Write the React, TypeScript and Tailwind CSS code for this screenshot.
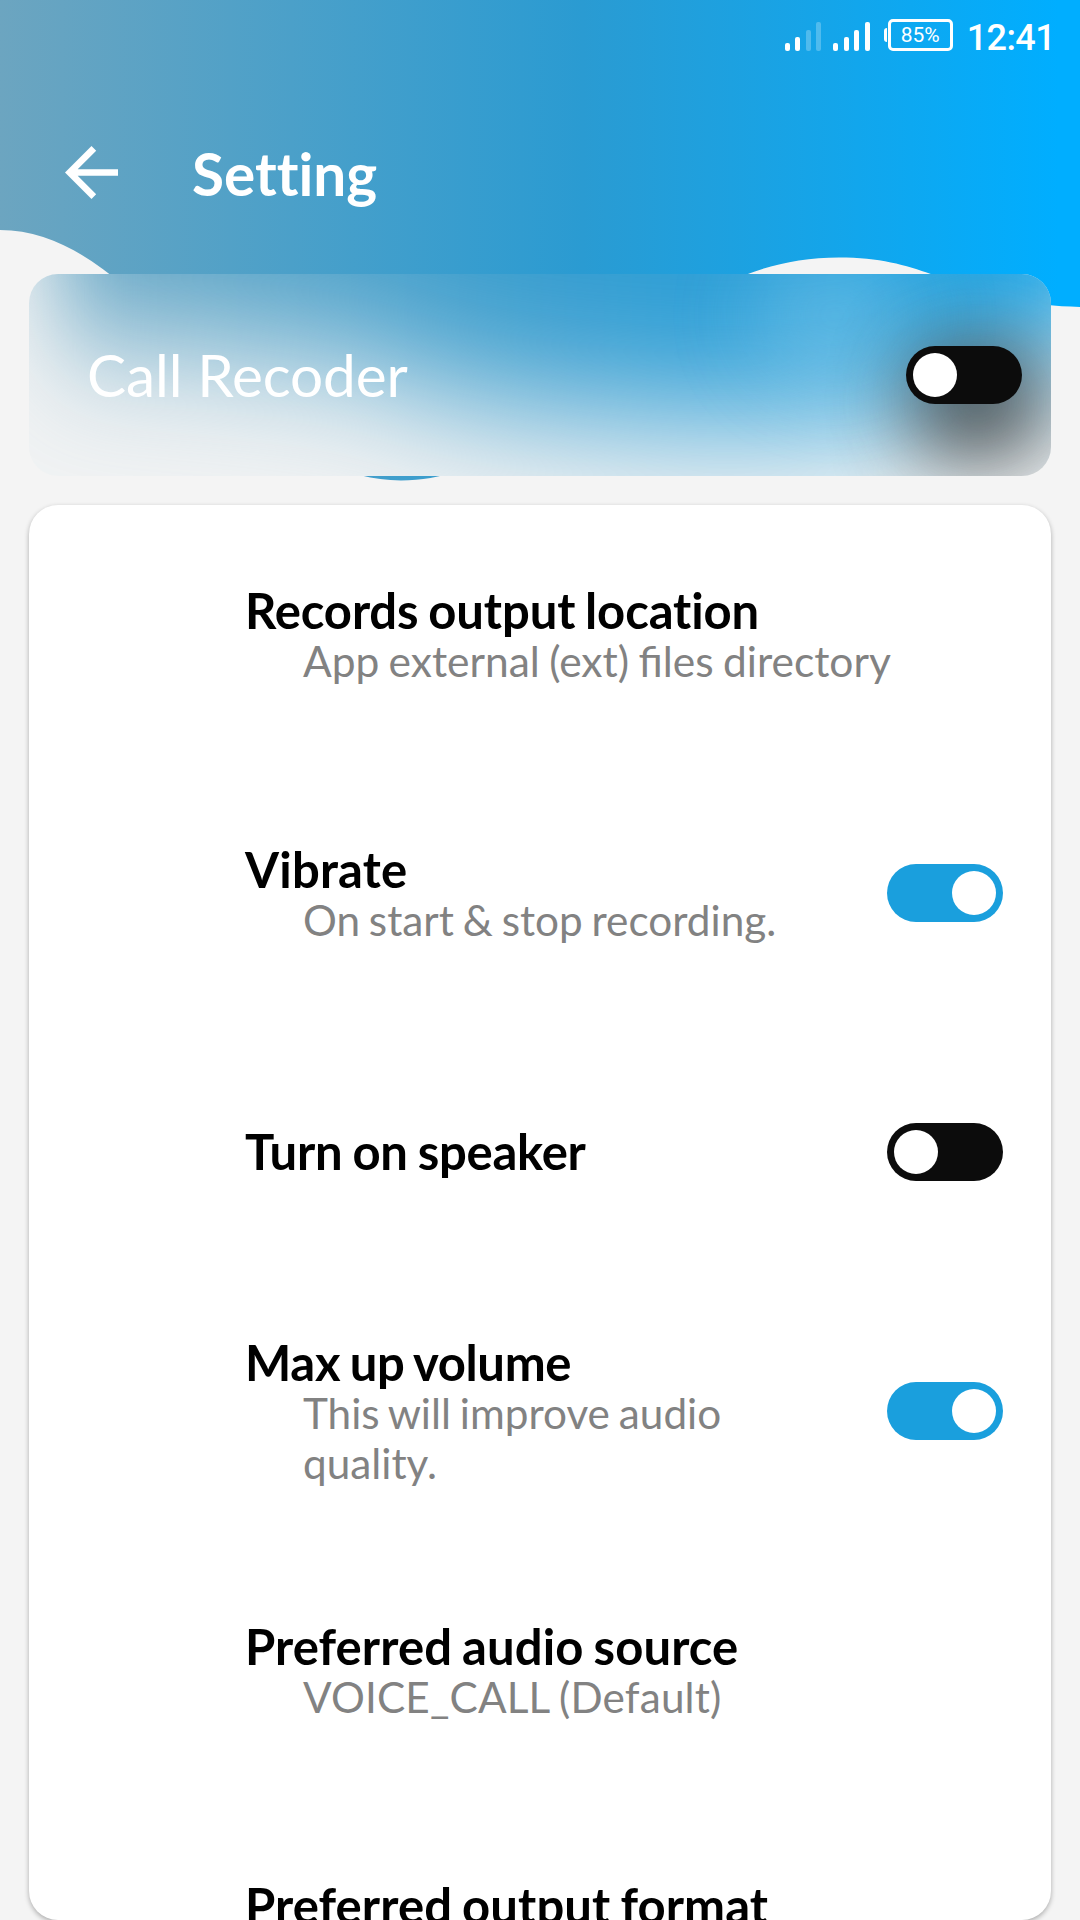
import React from "react";

function Toggle({ on }: { on: boolean }) {
  return (
    <div
      className={
        "flex h-[58px] w-[116px] shrink-0 items-center rounded-full px-[7px] " +
        (on ? "justify-end bg-[#1a9fdd]" : "justify-start bg-[#0c0c0c]")
      }
    >
      <div className="size-[44px] rounded-full bg-white" />
    </div>
  );
}

function Signal({ active }: { active: number }) {
  const heights = ["h-[8px]", "h-[14px]", "h-[21px]", "h-[29px]"];
  return (
    <div className="flex items-end gap-[5.5px]">
      {heights.map((h, i) => (
        <div key={h} className={h + " w-[5px] rounded-[2px] bg-white " + (i < active ? "" : "opacity-25")} />
      ))}
    </div>
  );
}

function Wave() {
  return (
    <svg className="absolute left-0 top-0" width="1080" height="490" viewBox="0 0 1080 490">
      <defs>
        <linearGradient id="sky" x1="0" x2="1" y1="0" y2="0">
          <stop offset="0" stopColor="#6ca5c0" />
          <stop offset="0.54" stopColor="#2a9bd2" />
          <stop offset="0.98" stopColor="#00aeff" />
        </linearGradient>
      </defs>
      <path
        fill="url(#sky)"
        d="M0 0H1080V307C955 304 939 257.500 839 257.500C637 257.500 564 480.500 401 480.500C238 480.500 150 230 0 230Z"
      />
    </svg>
  );
}

function FrostedGlass() {
  return (
    <svg className="absolute inset-0" width="1022" height="202" viewBox="29 274 1022 202">
      <defs>
        <linearGradient id="frost" gradientUnits="userSpaceOnUse" x1="0" x2="1080" y1="0" y2="0">
          <stop offset="0" stopColor="#6aa5c2" />
          <stop offset="0.2" stopColor="#5ba4c7" />
          <stop offset="0.5" stopColor="#3a9ecf" />
          <stop offset="0.63" stopColor="#309fd6" />
          <stop offset="0.9" stopColor="#20a4e2" />
          <stop offset="1" stopColor="#1ca9ec" />
        </linearGradient>
        <filter
          id="soft"
          filterUnits="userSpaceOnUse"
          x="-300"
          y="-400"
          width="1800"
          height="1400"
          colorInterpolationFilters="sRGB"
        >
          <feGaussianBlur stdDeviation="42 66" />
        </filter>
        <filter
          id="glow"
          filterUnits="userSpaceOnUse"
          x="500"
          y="0"
          width="900"
          height="800"
          colorInterpolationFilters="sRGB"
        >
          <feGaussianBlur stdDeviation="42 40" />
        </filter>
      </defs>
      <rect x="29" y="274" width="1022" height="202" fill="#f0f2f3" />
      <path
        filter="url(#soft)"
        fill="url(#frost)"
        d="M56 -300L56 330L140 338L250 348L360 362L430 388L540 408L660 418L760 420L880 410L960 380L1040 350L1110 340V-300Z"
      />
      <ellipse cx="835" cy="315" rx="85" ry="75" fill="#a9d8ee" opacity="0.3" filter="url(#glow)" />
      <rect x="914" y="344" width="128" height="116" rx="30" fill="#2a2725" opacity="0.76" filter="url(#glow)" />
    </svg>
  );
}

type Item = { title: string; titleFit?: string; lines?: string[]; lineFit?: string; on?: boolean; spacer?: boolean };

const items: Item[] = [
  {
    title: "Records output location",
    titleFit: "[word-spacing:-2px] tracking-[-0.12px]",
    lines: ["App external (ext) files directory"],
    lineFit: "[word-spacing:-1.6px] text-[42.5px]",
  },
  { title: "Vibrate", titleFit: "tracking-[0.2px]", lines: ["On start & stop recording."], on: true },
  { title: "Turn on speaker", titleFit: "[word-spacing:-1.5px] tracking-[-0.28px]", on: false },
  {
    title: "Max up volume",
    titleFit: "[word-spacing:-2px] tracking-[-0.33px]",
    lines: ["This will improve audio", "quality."],
    on: true,
  },
  {
    title: "Preferred audio source",
    titleFit: "[word-spacing:-2px] tracking-[0.1px]",
    lines: ["VOICE_CALL (Default)"],
    lineFit: "[word-spacing:-1px] tracking-[0.15px] text-[42.3px]",
  },
  { title: "Preferred output format", titleFit: "[word-spacing:-2px] tracking-[0.1px]", spacer: true },
];

function Row({ title, titleFit, lines, lineFit, on, spacer }: Item) {
  return (
    <div className="flex h-[259px] shrink-0 items-center justify-between pl-[216px] pr-[48px]">
      <div className={"whitespace-nowrap " + (lines || spacer ? "pt-[4px]" : "")}>
        <div
          className={
            "pb-[1px] text-[49px] font-bold leading-[49px] text-black [font-variant-ligatures:none] " +
            (titleFit ?? "")
          }
        >
          {title}
        </div>
        {lines?.map((l) => (
          <div
            key={l}
            className={
              "pl-[58px] leading-[50px] text-[#828282] " + (lineFit ?? "[word-spacing:-2px] text-[42.3px]")
            }
          >
            {l}
          </div>
        ))}
        {spacer && <div className="h-[50px]" />}
      </div>
      {on !== undefined && <Toggle on={on} />}
    </div>
  );
}

export default function App() {
  return (
    <div className="relative flex h-[1920px] w-[1080px] flex-col overflow-hidden bg-[#f4f4f4] font-['Lato',sans-serif]">
      <Wave />
      <div className="relative flex h-[274px] shrink-0 flex-col">
        <div className="flex h-[74px] items-center justify-end pr-[25px] font-['Roboto',sans-serif] text-white">
          <div className="mt-[-1px] flex items-end gap-[12px]">
            <Signal active={2} />
            <Signal active={4} />
          </div>
          <div className="ml-[14px] mt-[-4px] flex items-center gap-px">
            <div className="h-[14px] w-[3px] rounded-l-sm bg-white" />
            <div className="flex h-[32px] w-[65px] items-center justify-center rounded-[5px] border-[3px] border-white text-[21px] leading-none">
              85%
            </div>
          </div>
          <div className="ml-[14px] mt-[2px] text-[36px] font-medium leading-none tracking-[-0.6px]">12:41</div>
        </div>
        <div className="flex h-[200px] items-start pl-[65px] pt-[72px] text-white">
          <svg width="53" height="53" viewBox="4 4 16 16" fill="currentColor">
            <path d="M20 11H7.83l5.59-5.59L12 4l-8 8 8 8 1.41-1.41L7.83 13H20v-2z" />
          </svg>
          <h1 className="ml-[74px] mt-[-2px] text-[58.5px] font-bold leading-[58px] [font-variant-ligatures:none]">
            Setting
          </h1>
        </div>
      </div>
      <div className="relative mx-[29px] h-[202px] shrink-0 overflow-hidden rounded-[29px]">
        <FrostedGlass />
        <div className="relative flex h-full items-center justify-between pl-[58px] pr-[29px]">
          <div className="pb-[2px] text-[58.5px] leading-[70px] tracking-[-0.1px] text-white">Call Recoder</div>
          <Toggle on={false} />
        </div>
      </div>
      <div className="relative mx-[29px] mt-[29px] flex h-[1415px] shrink-0 flex-col overflow-hidden rounded-[29px] bg-white shadow-[0_2px_5px_rgba(0,0,0,0.3)]">
        <div className="mt-[-1px] flex flex-col">
          {items.map((item) => (
            <Row key={item.title} {...item} />
          ))}
        </div>
      </div>
    </div>
  );
}
